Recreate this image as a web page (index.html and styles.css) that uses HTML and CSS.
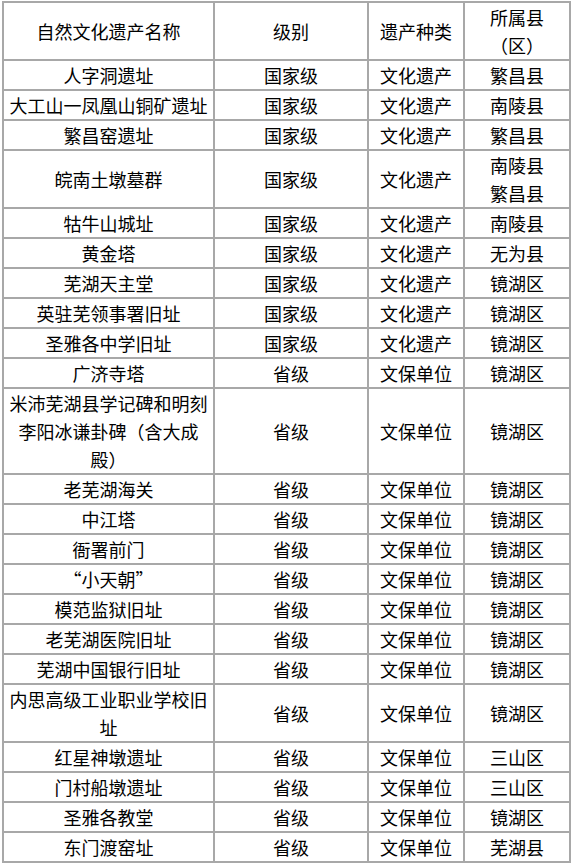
FILE: index.html
```html
<!DOCTYPE html>
<html lang="zh-CN">
<head>
<meta charset="utf-8">
<title>自然文化遗产</title>
<link rel="stylesheet" href="styles.css">
</head>
<body>
<table class="heritage">
  <colgroup>
    <col class="c-name">
    <col class="c-level">
    <col class="c-type">
    <col class="c-county">
  </colgroup>
  <tbody>
    <tr><td>自然文化遗产名称</td><td>级别</td><td>遗产种类</td><td>所属县（区）</td></tr>
    <tr><td>人字洞遗址</td><td>国家级</td><td>文化遗产</td><td>繁昌县</td></tr>
    <tr><td>大工山一凤凰山铜矿遗址</td><td>国家级</td><td>文化遗产</td><td>南陵县</td></tr>
    <tr><td>繁昌窑遗址</td><td>国家级</td><td>文化遗产</td><td>繁昌县</td></tr>
    <tr><td>皖南土墩墓群</td><td>国家级</td><td>文化遗产</td><td>南陵县<br>繁昌县</td></tr>
    <tr><td>牯牛山城址</td><td>国家级</td><td>文化遗产</td><td>南陵县</td></tr>
    <tr><td>黄金塔</td><td>国家级</td><td>文化遗产</td><td>无为县</td></tr>
    <tr><td>芜湖天主堂</td><td>国家级</td><td>文化遗产</td><td>镜湖区</td></tr>
    <tr><td>英驻芜领事署旧址</td><td>国家级</td><td>文化遗产</td><td>镜湖区</td></tr>
    <tr><td>圣雅各中学旧址</td><td>国家级</td><td>文化遗产</td><td>镜湖区</td></tr>
    <tr><td>广济寺塔</td><td>省级</td><td>文保单位</td><td>镜湖区</td></tr>
    <tr><td>米沛芜湖县学记碑和明刻李阳冰谦卦碑（含大成殿）</td><td>省级</td><td>文保单位</td><td>镜湖区</td></tr>
    <tr><td>老芜湖海关</td><td>省级</td><td>文保单位</td><td>镜湖区</td></tr>
    <tr><td>中江塔</td><td>省级</td><td>文保单位</td><td>镜湖区</td></tr>
    <tr><td>衙署前门</td><td>省级</td><td>文保单位</td><td>镜湖区</td></tr>
    <tr><td>“小天朝”</td><td>省级</td><td>文保单位</td><td>镜湖区</td></tr>
    <tr><td>模范监狱旧址</td><td>省级</td><td>文保单位</td><td>镜湖区</td></tr>
    <tr><td>老芜湖医院旧址</td><td>省级</td><td>文保单位</td><td>镜湖区</td></tr>
    <tr><td>芜湖中国银行旧址</td><td>省级</td><td>文保单位</td><td>镜湖区</td></tr>
    <tr><td>内思高级工业职业学校旧址</td><td>省级</td><td>文保单位</td><td>镜湖区</td></tr>
    <tr><td>红星神墩遗址</td><td>省级</td><td>文保单位</td><td>三山区</td></tr>
    <tr><td>门村船墩遗址</td><td>省级</td><td>文保单位</td><td>三山区</td></tr>
    <tr><td>圣雅各教堂</td><td>省级</td><td>文保单位</td><td>镜湖区</td></tr>
    <tr><td>东门渡窑址</td><td>省级</td><td>文保单位</td><td>芜湖县</td></tr>
  </tbody>
</table>
</body>
</html>
```

FILE: styles.css
```css
html, body {
  margin: 0;
  padding: 0;
  background: #ffffff;
}

body {
  padding: 1px 0 0 2px;
  font-family: "Noto Sans CJK SC", "Noto Sans", sans-serif;
  font-size: 18px;
  color: #000000;
}

.heritage {
  width: 569px;
  table-layout: fixed;
  border-collapse: separate;
  border-spacing: 0;
  border: 1px solid #a8a8a8;
}

.c-name { width: 211px; }
.c-level { width: 154px; }
.c-type { width: 96px; }
.c-county { width: 106px; }

.heritage td {
  border: 1px solid #a8a8a8;
  padding: 0 3px;
  line-height: 28px;
  text-align: center;
  vertical-align: middle;
  font-weight: 400;
}
```
